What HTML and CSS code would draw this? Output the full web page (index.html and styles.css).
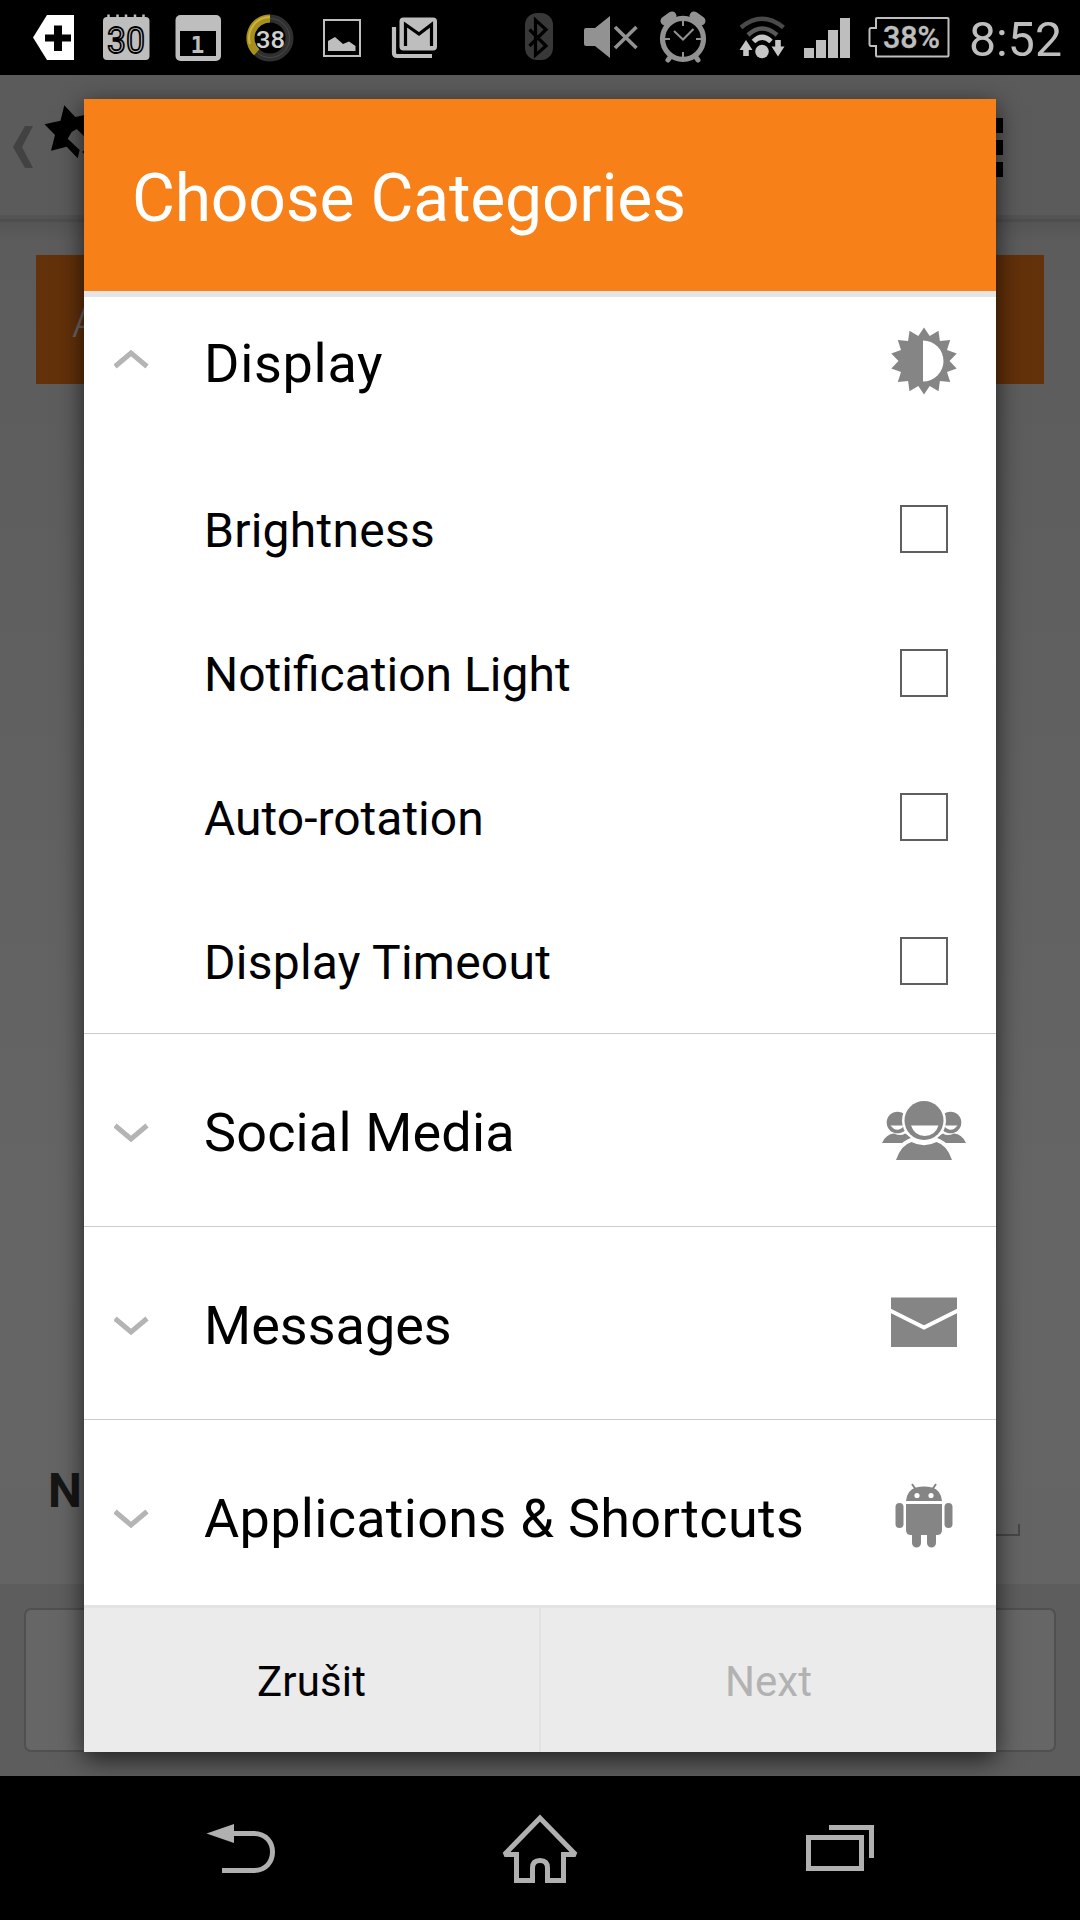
FILE: index.html
```html
<!DOCTYPE html>
<html lang="cs">
<head>
<meta charset="utf-8">
<title>Choose Categories</title>
<link rel="stylesheet" href="styles.css">
</head>
<body>
<div class="phone">
  <header class="status">
    <div class="status-group">
      <svg width="66" height="75" viewBox="24 0 66 75"><path fill="#fff" d="M33 37.5 47 15H74V60H47Z"/><path d="M54 25.5h8v9h9v7h-9v9.5h-8v-9.5h-9v-7h9z"/></svg>
      <svg width="72" height="75" viewBox="90 0 72 75"><rect x="103" y="17" width="46.500" height="43" rx="4" fill="#bebebe"/><path d="M108.500 14.500v4M117.500 14.500v4M126 14.500v4M135 14.500v4M143.500 14.500v4" stroke="#bebebe" stroke-width="2.500"/><text class="day-outline" x="107" y="52.500" textLength="38" lengthAdjust="spacingAndGlyphs">30</text></svg>
      <svg width="72" height="75" viewBox="162 0 72 75"><rect x="175.500" y="15" width="45.500" height="46" rx="5" fill="#bebebe"/><path d="M180 31h36v25h-36z"/><text class="day-slab" x="190.500" y="53">1</text></svg>
      <svg width="72" height="75" viewBox="234 0 72 75"><circle cx="270" cy="38" r="19.500" fill="none" stroke="#303030" stroke-width="8"/><circle cx="270" cy="38" r="19.500" fill="none" stroke="#484848"/><path d="M270 18.500A19.500 19.500 0 0 0 256.700 52.300" fill="none" stroke="#a88f1c" stroke-width="8"/><path d="M270 17A21 21 0 0 0 250 44" fill="none" stroke="#cbb442" stroke-width="2"/><text class="level" x="256" y="47.500" textLength="29" lengthAdjust="spacingAndGlyphs">38</text></svg>
      <svg width="72" height="75" viewBox="306 0 72 75"><path d="M324 20h36v36h-36z" fill="none" stroke="#bebebe" stroke-width="2"/><path fill="#bebebe" d="M328 51V41l7-4 8 7 6-2.500 6.500 4.500v5z"/></svg>
      <svg width="72" height="75" viewBox="378 0 72 75"><path d="M394 27v26q0 3 3 3h35" fill="none" stroke="#bebebe" stroke-width="4.200"/><rect x="399.500" y="17.500" width="37.500" height="33" rx="4" fill="#bebebe"/><path d="M405.500 46V24.500L419 34l12.500-9.500V46" fill="none" stroke="#000" stroke-width="3.200"/></svg>
    </div>
    <div class="status-group">
      <svg width="60" height="75" viewBox="510 0 60 75"><rect x="525" y="13" width="28" height="47" rx="12" fill="#383838"/><path d="M529.500 29.500 546 46l-10.500 9V20L546 29.500 529.500 46" fill="none" stroke="#000" stroke-width="3.200"/></svg>
      <svg width="80" height="75" viewBox="570 0 80 75"><path fill="#929292" d="M586 28h9l15-12v42L595 46h-9q-2 0-2-2V30q0-2 2-2z"/><path d="m615 27 21.500 21M636.500 27 615 48" stroke="#929292" stroke-width="3.600"/></svg>
      <svg width="76" height="75" viewBox="650 0 76 75"><g fill="none" stroke="#929292"><circle cx="683" cy="38.800" r="20.500" stroke-width="5.200"/><path d="m665 21 7-5M701 21l-7-5" stroke-width="9" stroke-linecap="round"/><path d="m671 56-3 4M695 56l3 4" stroke-width="5" stroke-linecap="round"/><path d="m674 31 9 8.500 10.500-10.500" stroke-width="2"/><path d="M683 21v5M683 52v5M665 39h5M696 39h5" stroke-width="2"/></g></svg>
      <svg width="70" height="75" viewBox="726 0 70 75"><g fill="none" stroke-width="4.500"><path d="M741 27.500Q762 10 783.500 27.500" stroke="#494949"/><path d="M748 35Q762 22 777 35" stroke="#585858"/><path d="M753.500 41.500Q762 33 771 41.500" stroke="#c6c6c6" stroke-width="5"/></g><g fill="#c6c6c6"><circle cx="762" cy="51.500" r="6.800"/><path d="m746 40 6.500 10h-3.700v6h-5.600v-6h-3.700zM778 56.500l6.500-10h-3.700V40h-5.600v6.500h-3.700z"/></g></svg>
      <svg width="64" height="75" viewBox="796 0 64 75"><path fill="#bebebe" d="M804 48h10v10h-10zM816 40h10v18h-10zM828 30h10v28h-10zM840 18h10v40h-10z"/></svg>
      <svg width="100" height="75" viewBox="860 0 100 75"><path d="M877 18h70.500q1 0 1 1v36.500q0 1-1 1H877q-1 0-1-1V46h-5q-1.500 0-1.500-2V30q0-2 1.500-2h5v-9q0-1 1-1z" fill="none" stroke="#bebebe" stroke-width="2"/><text class="charge" x="883" y="48" textLength="57" lengthAdjust="spacingAndGlyphs">38%</text></svg>
      <svg width="120" height="75" viewBox="960 0 120 75"><text class="clock" x="969" y="56" textLength="93" lengthAdjust="spacingAndGlyphs">8:52</text></svg>
    </div>
  </header>

  <main class="app">
    <div class="appbar">
      <svg width="100" height="140" viewBox="0 75 100 140"><path fill="#424242" d="m13 147 12-21h8l-11 21 11 21h-8z"/><path d="M64.300 105.300 75.300 117l14.700-3v28l-13.300-13-5 3-4 6.700 12 11.300-2 8.300-11-11.600L51 150.700l4-15.700-10.500-10.700 16-3.600zM82 152l8-6v12z"/></svg>
      <svg class="menu" width="15" height="140" viewBox="988 75 15 140"><path d="M988 118h15v15h-15zM988 140h15v15h-15zM988 162h15v15h-15z"/></svg>
    </div>
    <div class="content">
      <div class="banner">A</div>
      <div class="field"><span class="field-label">Na</span><span class="field-line"></span></div>
    </div>
    <div class="bottom"><div class="bottom-button"></div></div>

    <section class="dialog">
      <h1 class="dialog-title">Choose Categories</h1>
      <div class="list">
        <div class="row row-first">
          <svg class="chevron" width="36" height="20" viewBox="0 0 36 20"><path d="M1 17.500 17 4l16 13.500"/></svg>
          <span class="row-label t-display">Display</span>
          <svg class="icon" width="84" height="84" viewBox="-42 -42 84 84"><path d="M0-33.500 5.700-24.900 14.500-30.200 15.900-19.900 26.200-20.900 23-11.100 32.700-7.500 25.500 0 32.700 7.500 23 11.100 26.200 20.900 15.900 19.900 14.500 30.200 5.700 24.900 0 33.500-5.700 24.900-14.500 30.200-15.900 19.900-26.200 20.900-23 11.100-32.700 7.500-25.500 0-32.700-7.500-23-11.100-26.200-20.900-15.900-19.900-14.500-30.200-5.700-24.900Z"/><path fill="#fff" d="M-1-20.500A20.500 20.500 0 0 1-1 20.500Z"/></svg>
        </div>
        <div class="option"><span class="t-brightness">Brightness</span><span class="box"></span></div>
        <div class="option"><span>Notification Light</span><span class="box"></span></div>
        <div class="option"><span>Auto-rotation</span><span class="box"></span></div>
        <div class="option"><span class="t-timeout">Display Timeout</span><span class="box"></span></div>
        <div class="row row-line">
          <svg class="chevron" width="36" height="20" viewBox="0 0 36 20"><path d="M1 2.500 17 16 33 2.500"/></svg>
          <span class="row-label t-social">Social Media</span>
          <svg class="icon" width="84" height="84" viewBox="882 1088 84 84">
            <g id="friend"><circle cx="897.500" cy="1122.500" r="10.800"/><path d="M882 1143q4-9 12-9.500 7 3 11 0l7 4v5.500z"/><path d="M890.500 1125.500q6.500 8.500 14 0z" fill="#fff"/></g>
            <use href="#friend" transform="matrix(-1 0 0 1 1848 0)"/>
            <circle cx="924" cy="1120.500" r="22" fill="#fff"/>
            <path d="M892 1164q5-25 24-27h16q19 2 24 27z" fill="#fff"/>
            <path d="M896 1160q5-15 15.500-18 12.500 6.500 25 0 10.500 3 15.500 18z"/>
            <circle cx="924" cy="1120.500" r="19.500"/>
            <path d="M911 1125.500h27.500q-3.500 10.500-13.700 10.500T911 1125.500z" fill="#fff"/>
          </svg>
        </div>
        <div class="row row-line">
          <svg class="chevron" width="36" height="20" viewBox="0 0 36 20"><path d="M1 2.500 17 16 33 2.500"/></svg>
          <span class="row-label">Messages</span>
          <svg class="icon" width="84" height="84" viewBox="882 1281 84 84"><path d="M891 1297.500h66v49.500h-66z"/><path d="m890 1310.500 34 17 34-17" fill="none" stroke="#fff" stroke-width="4"/></svg>
        </div>
        <div class="row row-line">
          <svg class="chevron" width="36" height="20" viewBox="0 0 36 20"><path d="M1 2.500 17 16 33 2.500"/></svg>
          <span class="row-label t-apps">Applications &amp; Shortcuts</span>
          <svg class="icon" width="84" height="84" viewBox="882 1474 84 84"><path d="M906 1501q1-11 10-13.500 8-2 16 0 9 2.500 10 13.500zM906 1504h36v26q0 5-5 5h-1v8a4.500 4.500 0 0 1-9 0v-8h-6v8a4.500 4.500 0 0 1-9 0v-8h-1q-5 0-5-5z"/><path d="m912 1484 4 6M936 1484l-4 6" stroke="#858585" stroke-width="2"/><rect x="895.500" y="1503" width="8" height="25" rx="4"/><rect x="944.500" y="1503" width="8" height="25" rx="4"/><circle cx="917" cy="1495.500" r="2.600" fill="#fff"/><circle cx="931" cy="1495.500" r="2.600" fill="#fff"/></svg>
        </div>
      </div>
      <div class="actions">
        <button class="action t-cancel">Zrušit</button>
        <button class="action action-off">Next</button>
      </div>
    </section>
  </main>

  <nav class="nav">
    <svg width="90" height="144" viewBox="195 1776 90 144"><path fill="#b0b0b0" d="M206.500 1833.500 234 1824v19z"/><path d="M232 1833.500h22c12 0 18.500 9 18.500 18.500s-6.500 18.500-18.500 18.500h-32"/></svg>
    <svg width="90" height="144" viewBox="495 1776 90 144"><path d="M540 1818 504.500 1854.500h12v26h16V1868q0-7.500 7.500-7.500t7.500 7.500v12.500h16v-26h12z" stroke-miterlimit="2"/></svg>
    <svg width="90" height="144" viewBox="795 1776 90 144"><path d="M808.500 1837.500h53v31h-53zM829 1827.500h42.500v30.500"/></svg>
  </nav>
</div>
</body>
</html>
```
FILE: styles.css
```css
* { box-sizing: border-box; }

body {
  margin: 0;
  background: #000;
  font-family: Roboto, "Noto Sans", sans-serif;
}

.phone {
  display: flex;
  flex-direction: column;
  width: 1080px;
  height: 1920px;
  overflow: hidden;
}

svg { display: block; flex: none; }

/* Status bar */
.status {
  display: flex;
  justify-content: space-between;
  height: 75px;
  padding-left: 24px;
  background: #000;
}
.status-group { display: flex; }
.day-outline { font-size: 36px; font-weight: 400; fill: #bebebe; stroke: #000; stroke-width: 1.8px; }
.day-slab { font: bold 23px "DejaVu Sans Mono", monospace; fill: #bebebe; }
.level { font-size: 24px; font-weight: 500; fill: #d0d0d0; }
.charge { font-size: 31px; font-weight: 500; fill: #bebebe; stroke: #bebebe; stroke-width: .4px; }
.clock { font-size: 49px; fill: #bebebe; }

/* Dimmed screen behind the dialog */
.app {
  position: relative;
  display: flex;
  flex-direction: column;
  height: 1701px;
  overflow: hidden;
}
.appbar {
  display: flex;
  justify-content: space-between;
  height: 147px;
  padding-right: 77px;
  background: #5b5b5b;
  border-bottom: 3px solid #4e4e4e;
  box-shadow: inset 0 -4px #545454;
}
.content {
  display: flex;
  flex-direction: column;
  justify-content: space-between;
  flex: 1;
  padding: 33px 36px 48px;
  background: linear-gradient(#555, #5c5c5c 20px, #5d5d5d 180px, #656565 1000px, #646464);
}
.banner {
  height: 129px;
  padding: 40px 36px 0;
  background: #63310a;
  color: #686868;
  font-size: 45px;
  font-weight: 300;
}
.field { display: flex; align-items: flex-end; gap: 20px; padding: 0 24px 0 12px; }
.field-label {
  padding-bottom: 17px;
  color: #161616;
  font-size: 48px;
  font-weight: 700;
  line-height: 56px;
  letter-spacing: 1.5px;
}
.field-line { flex: 1; height: 12px; border: 2px solid #474747; border-top: 0; }
.bottom { height: 192px; padding: 24px 24px; background: #5d5d5d; }
.bottom-button { height: 144px; border: 2px solid #505050; border-radius: 7px; background: #666; }

/* Dialog */
.dialog {
  position: absolute;
  top: 24px;
  left: 84px;
  display: flex;
  flex-direction: column;
  width: 912px;
  height: 1653px;
  background: #fff;
  box-shadow: 0 7px 24px rgba(0, 0, 0, .68);
}
.dialog-title {
  display: flex;
  align-items: center;
  height: 198px;
  margin: 0;
  padding: 6px 48px 0;
  background: #f78018;
  border-bottom: 6px solid #e5e5e5;
  color: #fff;
  font-size: 66px;
  font-weight: 400;
  letter-spacing: -.22px;
}
.list { height: 1308px; overflow: hidden; }
.row {
  display: flex;
  align-items: center;
  height: 192px;
  padding: 0 30px;
  font-size: 54px;
  color: #000;
}
.row-first { margin-top: -32px; }
.row-line { height: 193px; border-top: 1px solid #ccc; }
.row-label { flex: 1; padding: 4px 0 0 54px; white-space: nowrap; }
.chevron { margin-top: 5px; fill: none; stroke: #b4b4b4; stroke-width: 5; }
.row-first .chevron { margin: 0 0 5px; }
.icon { fill: #858585; }
.option {
  display: flex;
  align-items: center;
  justify-content: space-between;
  height: 144px;
  padding: 0 48px 0 120px;
  font-size: 48px;
}
.option span:first-child { padding-top: 2px; }
.box { width: 48px; height: 48px; border: 2px solid #5f5f5f; }
.t-display { letter-spacing: .7px; }
.t-brightness { letter-spacing: .25px; }
.t-timeout { letter-spacing: .25px; }
.t-social { letter-spacing: .15px; }
.t-apps { letter-spacing: .3px; }
.actions { display: flex; height: 147px; border-top: 3px solid #e3e3e3; background: #ebebeb; }
.action {
  flex: 1;
  padding: 3px 0 0;
  border: 0;
  background: none;
  color: #000;
  font: 42px Roboto, "Noto Sans", sans-serif;
}
.t-cancel { letter-spacing: .15px; }
.action + .action { border-left: 2px solid #e3e3e3; }
.action-off { color: #b2b2b2; }

/* Navigation bar */
.nav {
  display: flex;
  justify-content: space-between;
  height: 144px;
  padding: 0 195px;
  background: #000;
  fill: none;
  stroke: #b0b0b0;
  stroke-width: 5;
}
.nav path[fill] { stroke: none; }
```
